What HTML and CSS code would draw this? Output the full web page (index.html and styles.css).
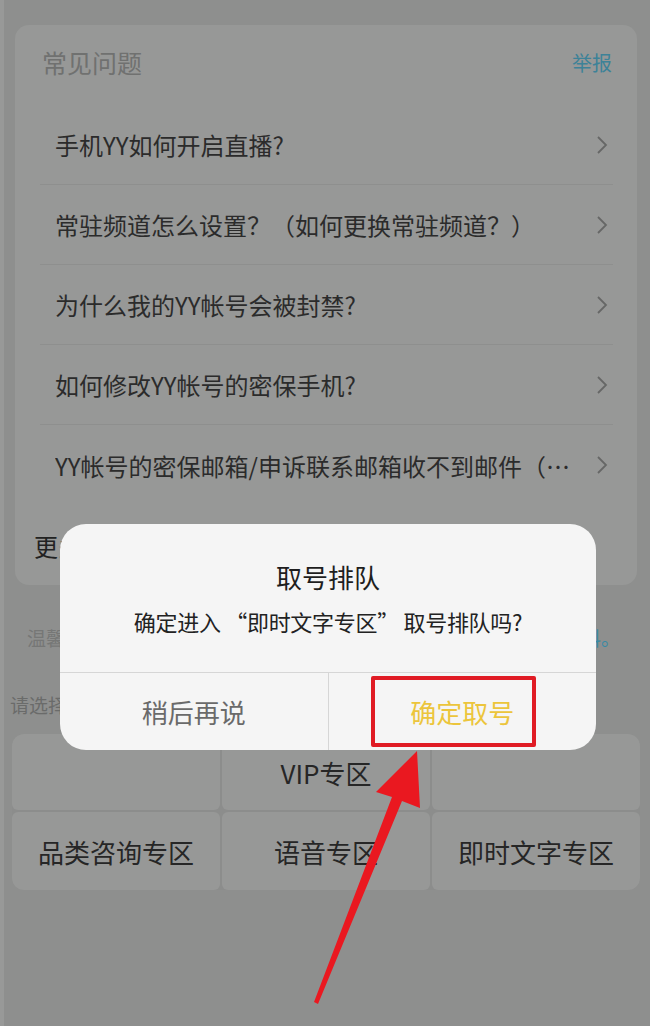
FILE: index.html
```html
<!DOCTYPE html>
<html lang="zh-CN">
<head>
<meta charset="utf-8">
<title>常见问题</title>
<link rel="stylesheet" href="styles.css">
</head>
<body>
<div class="page">
  <section class="faq">
    <div class="faq-head">
      <span class="faq-title">常见问题</span>
      <span class="faq-report">举报</span>
    </div>
    <ul class="faq-list">
      <li class="faq-item"><span class="faq-text">手机YY如何开启直播?</span><svg class="chev" viewBox="0 0 12 20"><polyline points="2,2 10,10 2,18"/></svg></li>
      <li class="faq-item"><span class="faq-text">常驻频道怎么设置？（如何更换常驻频道？）</span><svg class="chev" viewBox="0 0 12 20"><polyline points="2,2 10,10 2,18"/></svg></li>
      <li class="faq-item"><span class="faq-text">为什么我的YY帐号会被封禁?</span><svg class="chev" viewBox="0 0 12 20"><polyline points="2,2 10,10 2,18"/></svg></li>
      <li class="faq-item"><span class="faq-text">如何修改YY帐号的密保手机?</span><svg class="chev" viewBox="0 0 12 20"><polyline points="2,2 10,10 2,18"/></svg></li>
      <li class="faq-item"><span class="faq-text">YY帐号的密保邮箱/申诉联系邮箱收不到邮件（邮件被拦截）怎么办？</span><svg class="chev" viewBox="0 0 12 20"><polyline points="2,2 10,10 2,18"/></svg></li>
    </ul>
    <div class="faq-more">更多问题</div>
  </section>

  <p class="tip"><span class="tip-text">温馨提示：咨询前请先准备好帐号相关</span><span class="tip-link">资料。</span></p>
  <p class="choose">请选择您要咨询的专区：</p>

  <div class="zones">
    <div class="zone"></div>
    <div class="zone">VIP专区</div>
    <div class="zone"></div>
    <div class="zone">品类咨询专区</div>
    <div class="zone">语音专区</div>
    <div class="zone">即时文字专区</div>
  </div>
</div>

<div class="dialog">
  <div class="dialog-body">
    <div class="dialog-title">取号排队</div>
    <div class="dialog-msg">确定进入 “即时文字专区” 取号排队吗?</div>
  </div>
  <div class="dialog-actions">
    <div class="btn btn-cancel">稍后再说</div>
    <div class="btn btn-ok">确定取号<span class="mark"></span></div>
  </div>
</div>

<svg class="arrow" viewBox="0 0 650 1026" width="650" height="1026">
  <polygon points="314,1002 392,797 376,792 417,751 420,808 402,801 318,1004"/>
</svg>
</body>
</html>
```

FILE: styles.css
```css
html, body {
  margin: 0;
  padding: 0;
}

html {
  background: #8e8f8e;
}

body {
  width: 650px;
  min-height: 1026px;
  position: relative;
  overflow: hidden;
  font-family: "Noto Sans CJK SC", "Noto Sans", sans-serif;
  background: #8e8f8e;
}

.page {
  min-height: 1026px;
  padding-top: 25px;
  box-sizing: border-box;
  border-left: 4px solid #989998;
}

/* FAQ card */
.faq {
  margin-left: 11px;
  width: 622px;
  background: #979897;
  border-radius: 14px;
}

.faq-head {
  height: 80px;
  display: flex;
  align-items: center;
  justify-content: space-between;
  padding: 0 25px 6px 27px;
  box-sizing: border-box;
}

.faq-title {
  font-size: 25px;
  color: #707170;
}

.faq-report {
  font-size: 20px;
  color: #3d8298;
}

.faq-list {
  list-style: none;
  margin: 0 24px 0 25px;
  padding: 0;
}

.faq-item {
  height: 80px;
  display: flex;
  align-items: center;
  box-sizing: border-box;
  padding: 0 5px 0 15px;
  border-bottom: 1px solid #8e8f8e;
}

.faq-item:last-child {
  border-bottom: none;
}

.faq-text {
  flex: 1;
  min-width: 0;
  font-size: 24px;
  color: #2b2b2b;
  white-space: nowrap;
  overflow: hidden;
  text-overflow: ellipsis;
  padding-right: 6px;
}

.chev {
  width: 12px;
  height: 20px;
  flex: none;
}

.chev polyline {
  fill: none;
  stroke: #666766;
  stroke-width: 1.8;
}

.faq-more {
  height: 80px;
  display: flex;
  align-items: center;
  padding-left: 19px;
  font-size: 24px;
  color: #222;
}

/* tips */
.tip {
  margin: 40px 0 0 0;
  width: 616px;
  padding-left: 23px;
  box-sizing: border-box;
  display: flex;
  justify-content: space-between;
  font-size: 19px;
  line-height: 26px;
  color: #767776;
}

.tip-link {
  color: #3a8aa5;
}

.choose {
  margin: 41px 0 0 6px;
  font-size: 19px;
  line-height: 26px;
  color: #6a6b6a;
}

/* zones grid */
.zones {
  margin: 16px 0 0 8px;
  width: 628px;
  display: grid;
  grid-template-columns: repeat(3, 1fr);
  grid-template-rows: 76px 78px;
  gap: 2px;
  background: #8c8d8c;
  border-radius: 12px;
  overflow: hidden;
}

.zone {
  background: #979897;
  display: flex;
  align-items: center;
  justify-content: center;
  font-size: 26px;
  color: #262626;
  border-radius: 6px;
}

/* dialog */
.dialog {
  position: absolute;
  left: 60px;
  top: 524px;
  width: 536px;
  background: #f5f5f5;
  border-radius: 26px;
}

.dialog-body {
  padding: 36px 0 36px;
  text-align: center;
  border-bottom: 1px solid #d6d6d6;
}

.dialog-title {
  font-size: 26px;
  line-height: 34px;
  color: #1e1e1e;
}

.dialog-msg {
  margin-top: 12px;
  font-size: 22px;
  line-height: 30px;
  color: #222;
  letter-spacing: -0.3px;
}

.dialog-actions {
  display: flex;
  height: 77px;
}

.btn {
  flex: 1;
  display: flex;
  align-items: center;
  justify-content: center;
  font-size: 26px;
  position: relative;
}

.btn-cancel {
  color: #6a6a6a;
  border-right: 1px solid #d6d6d6;
}

.btn-ok {
  color: #ecc53c;
}

.mark {
  position: absolute;
  left: 42px;
  top: 3px;
  width: 165px;
  height: 71px;
  box-sizing: border-box;
  border: 4px solid #e01b24;
  border-radius: 2px;
}

/* annotation arrow */
.arrow {
  position: absolute;
  left: 0;
  top: 0;
  pointer-events: none;
}

.arrow polygon {
  fill: #ea1820;
}
```
